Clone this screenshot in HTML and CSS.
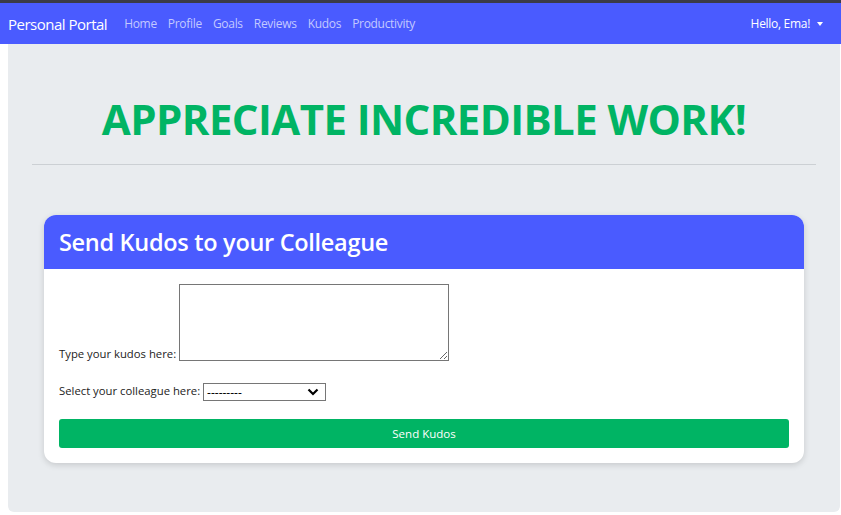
FILE: index.html
```html
<!DOCTYPE html>
<html>
<head>
<meta charset="utf-8">
<link rel="stylesheet" href="styles.css">
</head>
<body>
<div class="topline"></div>
<nav class="navbar">
  <a class="brand">Personal Portal</a>
  <ul class="links">
    <li>Home</li><li>Profile</li><li>Goals</li><li>Reviews</li><li>Kudos</li><li>Productivity</li>
  </ul>
  <div class="user">Hello, Ema! <span class="caret"></span></div>
</nav>
<main class="jumbo">
  <h1 class="title">APPRECIATE INCREDIBLE WORK!</h1>
  <hr class="rule">
  <section class="card">
    <header class="card-head"><h2>Send Kudos to your Colleague</h2></header>
    <form class="card-body">
      <p class="row"><label>Type your kudos here:</label> <textarea></textarea></p>
      <p class="row"><label>Select your colleague here:</label> <span class="select-wrap"><select><option>---------</option></select><svg class="chev" width="12" height="8" viewBox="0 0 12 8"><path d="M1.5 1.5 L6 6 L10.5 1.5" fill="none" stroke="#000" stroke-width="2.2"/></svg></span></p>
      <button type="button" class="send">Send Kudos</button>
    </form>
  </section>
</main>
</body>
</html>
```
FILE: styles.css
```css
html, body { margin: 0; padding: 0; background: #fff; }
body { font-family: "Open Sans", "Noto Sans", sans-serif; width: 841px; height: 515px; overflow: hidden; }
.topline { height: 3px; background: #3b3b48; }
.navbar { height: 41px; background: #4a5bff; display: flex; align-items: center; padding: 0 18px 0 8px; }
.brand { color: #fff; font-size: 15px; margin-right: 17px; letter-spacing: -0.5px; }
.links { list-style: none; margin: 0; padding: 0; display: flex; gap: 11px; }
.links li { color: #c3c9ff; font-size: 12px; letter-spacing: -0.3px; }
.user { margin-left: auto; color: #fff; font-size: 12px; display: flex; align-items: center; gap: 4px; letter-spacing: -0.3px; }
.caret { width: 0; height: 0; border-left: 3.5px solid transparent; border-right: 3.5px solid transparent; border-top: 4px solid #fff; margin-left: 3px; }
.jumbo { margin: 0 1px 0 8px; height: 468px; background: #e9ecef; border-radius: 0 0 6px 6px; padding: 1px 24px 0; box-sizing: border-box; }
.title { margin: 49px 0 0; text-align: center; color: #00b464; font-size: 42px; font-weight: 700; letter-spacing: -0.6px; line-height: 50px; }
.rule { margin: 20px 0 0; border: 0; border-top: 1px solid #ccd0d4; }
.card { margin: 50px 12px 0; background: #fff; border-radius: 12px; box-shadow: 0 2px 6px rgba(0,0,0,0.15); overflow: hidden; }
.card-head { background: #4a5bff; height: 54px; display: flex; align-items: center; padding: 0 15px; }
.card-head h2 { margin: 0; color: #fff; font-size: 23.5px; font-weight: 600; letter-spacing: -0.3px; }
.card-body { padding: 15px 15px 15px; }
.row { margin: 0 0 22px; font-size: 11.3px; color: #222; }
textarea { width: 270px; height: 77px; box-sizing: border-box; border: 1px solid #767676; vertical-align: bottom; margin: 0; padding: 1px; }
.select-wrap { position: relative; display: inline-block; vertical-align: middle; }
select { appearance: none; -webkit-appearance: none; width: 123px; height: 18px; font-size: 12px; border: 1px solid #767676; border-radius: 0; background: #fff; margin: 0; padding: 0 3px; display: block; font-family: inherit; color: #000; }
.chev { position: absolute; right: 7px; top: 5px; pointer-events: none; }
.send { display: block; width: 100%; height: 29px; border: 0; border-radius: 3px; background: #00b464; color: #fff; font-family: inherit; font-size: 11.5px; margin-top: -4px; }
```
